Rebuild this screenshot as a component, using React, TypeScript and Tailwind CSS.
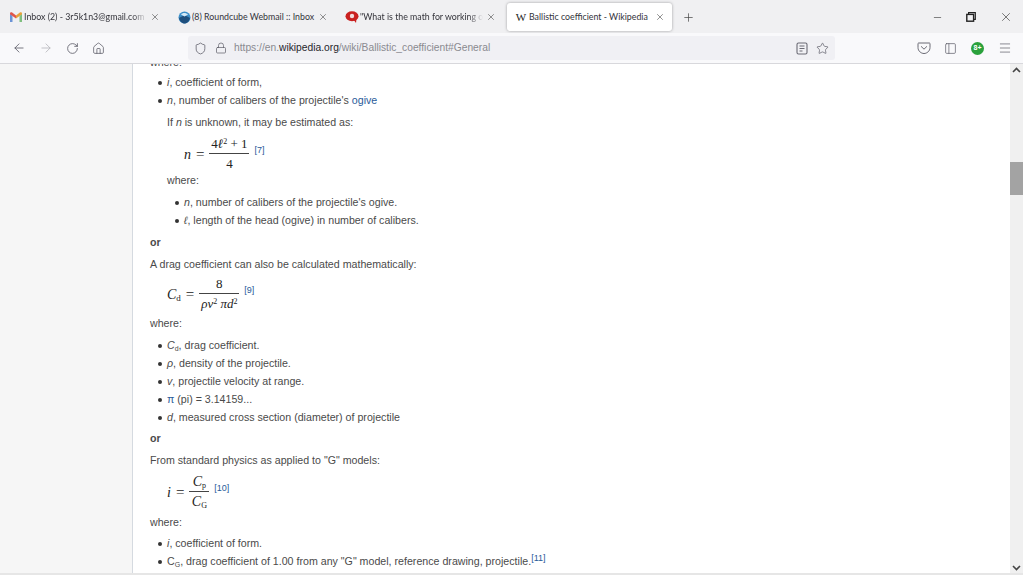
import { ArrowLeft, ArrowRight, Home, Lock, Menu, Minus, PanelLeft, Plus, RotateCw, Shield, Star, X } from "lucide-react";
import type { ReactNode } from "react";

const mathFont = "font-['Liberation_Serif',serif]";

const GmailIcon = () => (
	<svg width="12" height="10" viewBox="0 0 12 10">
		<path d="M0 1.5 V10 H2.5 V4 Z" fill="#6b93d6" />
		<path d="M12 1.5 V10 H9.5 V4 Z" fill="#7fbf7f" />
		<path d="M0 1.5 C0 0 1.5 0 2.2 .5 L6 3.6 L6 6.6 L0 2.2 Z" fill="#e0554a" />
		<path d="M12 1.5 C12 0 10.5 0 9.8 .5 L6 3.6 L6 6.6 L12 2.2 Z" fill="#e8a13a" />
	</svg>
);

const RoundcubeIcon = () => (
	<svg width="13" height="13" viewBox="0 0 13 13">
		<circle cx="6.5" cy="6.5" r="6" fill="#3d8fc9" />
		<path d="M1 7 L6.5 4 L12 7 C11 11 8.5 12.5 6.5 12.5 C4.5 12.5 2 11 1 7 Z" fill="#1f4f7d" />
		<path d="M3 3.5 C4.5 1.5 8 1.5 10 3.5 L6.5 5.5 Z" fill="#d5e9f6" />
	</svg>
);

const QuestionIcon = () => (
	<svg width="14" height="12" viewBox="0 0 14 12">
		<ellipse cx="7" cy="5.2" rx="6.5" ry="5" fill="#c9201f" />
		<circle cx="7" cy="5" r="2.2" fill="#f3dcdc" />
		<path d="M8 8 L11 12 L11.5 8 Z" fill="#c9201f" />
	</svg>
);

const PocketIcon = () => (
	<svg width="14" height="14" viewBox="0 0 14 14" fill="none" stroke="#6b6b75" strokeWidth="1">
		<path d="M1.5 2 H12.5 C13 2 13 2.5 13 3 V6.5 C13 10 10 12.5 7 12.5 C4 12.5 1 10 1 6.5 V3 C1 2.5 1 2 1.5 2 Z" />
		<path d="M4.3 5.6 L7 8.2 L9.7 5.6" strokeLinecap="round" />
	</svg>
);

const ReaderIcon = () => (
	<svg width="12" height="13" viewBox="0 0 12 13" fill="none" stroke="#6b6b75" strokeWidth="1.1">
		<rect x="1" y="1" width="10" height="11" rx="1.5" />
		<path d="M3.5 4 H8.5 M3.5 6.5 H8.5 M3.5 9 H6.5" />
	</svg>
);

const RestoreIcon = () => (
	<svg width="10" height="10" viewBox="0 0 10 10" fill="none" stroke="#222" strokeWidth="1.2">
		<rect x=".8" y="2.4" width="6.8" height="6.8" strokeWidth="1.4" />
		<path d="M2.6 2.2 V.7 H9.3 V7.4 H7.8" />
	</svg>
);

const Tab = ({ icon, title, active, fade }: { icon: ReactNode; title: string; active?: boolean; fade?: boolean }) => (
	<div
		className={
			active
				? "w-[165px] h-[28px] ml-[3px] flex items-center pl-[6px] pr-[7px] bg-white rounded-[3px] shadow-[0_0_3px_rgba(0,0,0,0.35)]"
				: "w-[168px] h-[28px] flex items-center pl-[8px] pr-[8px]"
		}
	>
		<span className="w-[16px] shrink-0 flex justify-center">{icon}</span>
		<span
			className={`flex-1 min-w-0 overflow-hidden whitespace-nowrap font-['Lato',sans-serif] text-[8.8px] text-[#33333a] ${
				fade ? "[mask-image:linear-gradient(to_right,black_88%,transparent)]" : ""
			}`}
		>
			{title}
		</span>
		<X size={10} strokeWidth={1.4} className="ml-[3px] shrink-0 text-[#444]" />
	</div>
);

const Slot = ({ children, w = "w-[27px]" }: { children: ReactNode; w?: string }) => (
	<span className={`${w} flex justify-center items-center shrink-0`}>{children}</span>
);

const Line = ({ className = "", children }: { className?: string; children: ReactNode }) => (
	<p className={`whitespace-nowrap ${className}`}>{children}</p>
);

const Bullet = ({ nested, children }: { nested?: boolean; children: ReactNode }) => (
	<div className={`h-[18px] flex items-center ${nested ? "pl-[25px]" : "pl-[8px]"}`}>
		<span className="w-[4px] h-[4px] rounded-full bg-[#333] shrink-0 mr-[5px]" />
		<span className="whitespace-nowrap">{children}</span>
	</div>
);

const Ref = ({ children }: { children: ReactNode }) => (
	<span className="font-['Liberation_Sans',sans-serif] text-[9px] text-[#2a5a99] self-center -mt-[6px]">{children}</span>
);

const Frac = ({ top, bottom, w }: { top: ReactNode; bottom: ReactNode; w: string }) => (
	<span className={`${w} inline-flex flex-col items-center mx-[5px]`}>
		<span className="leading-[18px] h-[19px] w-full text-center border-b border-[#444] whitespace-nowrap">{top}</span>
		<span className="leading-[19px] h-[19px] whitespace-nowrap">{bottom}</span>
	</span>
);

export default function App() {
	return (
		<div className="w-[1023px] h-[575px] overflow-hidden flex flex-col bg-white font-['Liberation_Sans',Arial,sans-serif]">
			{/* tab strip */}
			<div className="h-[33px] shrink-0 bg-[#f0f0f2] flex items-end pb-[2px]">
				<Tab fade icon={<GmailIcon />} title="Inbox (2) - 3r5k1n3@gmail.com" />
				<Tab icon={<RoundcubeIcon />} title="(8) Roundcube Webmail :: Inbox" />
				<Tab fade icon={<QuestionIcon />} title={'"What is the math for working out'} />
				<Tab active icon={<span className={`${mathFont} text-[11px] text-[#222]`}>W</span>} title="Ballistic coefficient - Wikipedia" />
				<Plus size={13} strokeWidth={1.3} className="ml-[10px] mb-[7px] text-[#444]" />
				<div className="ml-auto flex items-center mb-[7px]">
					<Slot w="w-[34px]"><Minus size={11} strokeWidth={1.3} className="text-[#333]" /></Slot>
					<Slot w="w-[34px]"><RestoreIcon /></Slot>
					<Slot w="w-[35px]"><X size={14} strokeWidth={1.1} className="text-[#333]" /></Slot>
				</div>
			</div>

			{/* nav bar */}
			<div className="h-[31px] shrink-0 bg-[#f9f9fb] border-b border-[#d8d8dc] flex items-center pl-[5px] text-[#5b5b66]">
				<Slot><ArrowLeft size={14} strokeWidth={1.4} /></Slot>
				<Slot><ArrowRight size={14} strokeWidth={1.4} className="text-[#b5b5ba]" /></Slot>
				<Slot><RotateCw size={13} strokeWidth={1.5} /></Slot>
				<Slot w="w-[25px]"><Home size={13} strokeWidth={1.4} /></Slot>
				<div className="ml-[77px] w-[647px] h-[24px] bg-[#f0f0f4] rounded-[3px] flex items-center pl-[6px] pr-[2px]">
					<Shield size={13} strokeWidth={1.4} />
					<Lock size={12} strokeWidth={1.4} className="ml-[8px]" />
					<span className="ml-[7px] text-[10.26px] text-[#8a8a90] whitespace-nowrap">
						https://en.<span className="text-[#26262c]">wikipedia.org</span>/wiki/Ballistic_coefficient#General
					</span>
					<span className="ml-auto flex items-center">
						<Slot w="w-[21px]"><ReaderIcon /></Slot>
						<Slot w="w-[21px]"><Star size={13} strokeWidth={1.3} /></Slot>
					</span>
				</div>
				<div className="ml-[75px] flex items-center">
					<Slot><PocketIcon /></Slot>
					<Slot><PanelLeft size={13} strokeWidth={1.3} /></Slot>
					<Slot>
						<span className="w-[13px] h-[13px] rounded-full bg-[#2aa13c] text-white text-[7px] font-bold flex items-center justify-center">8+</span>
					</Slot>
					<Slot><Menu size={14} strokeWidth={1.2} /></Slot>
				</div>
			</div>

			{/* page */}
			<div className="flex-1 min-h-0 flex">
				<div className="w-[132px] shrink-0 bg-[#f6f6f6]" />
				<div className="flex-1 min-w-0 overflow-hidden border-l border-[#d5dae0] pl-[17px] text-[10.65px] text-[#4a4a4a]">
					<div className="-mt-[10px]">
						<Line className="h-[16px] leading-[16px]">where:</Line>
						<div className="mt-[4px]">
							<Bullet><i>i</i>, coefficient of form,</Bullet>
							<Bullet><i>n</i>, number of calibers of the projectile's <span className="text-[#2a5a99]">ogive</span></Bullet>
						</div>
						<Line className="pl-[17px] mt-[3px] h-[18px] leading-[18px]">If <i>n</i> is unknown, it may be estimated as:</Line>
						<div className={`pl-[34px] h-[40px] pt-[6px] flex items-center text-[13px] text-[#222] ${mathFont}`}>
							<i className="text-[14px]">n</i>
							<span className="ml-[5px] text-[15px]">=</span>
							<Frac w="w-[40px]" top={<span>4<i>ℓ</i><sup className="text-[8px]">2</sup> + 1</span>} bottom="4" />
							<Ref>[7]</Ref>
						</div>
						<Line className="pl-[17px] h-[18px] leading-[18px]">where:</Line>
						<div className="mt-[5px]">
							<Bullet nested><i>n</i>, number of calibers of the projectile's ogive.</Bullet>
							<Bullet nested><i>ℓ</i>, length of the head (ogive) in number of calibers.</Bullet>
						</div>
						<Line className="mt-[3px] h-[18px] leading-[18px] font-bold">or</Line>
						<Line className="mt-[4px] h-[18px] leading-[18px]">A drag coefficient can also be calculated mathematically:</Line>
						<div className={`pl-[17px] mt-[1px] h-[39px] pt-[1px] flex items-center text-[13px] text-[#222] ${mathFont}`}>
							<span className="text-[14px]"><i>C</i><sub className="text-[9px]">d</sub></span>
							<span className="ml-[5px] text-[15px]">=</span>
							<Frac w="w-[40px]" top="8" bottom={<i>ρv<sup className="text-[8px] not-italic">2</sup> πd<sup className="text-[8px] not-italic">2</sup></i>} />
							<Ref>[9]</Ref>
						</div>
						<Line className="mt-[1px] h-[18px] leading-[18px]">where:</Line>
						<div className="mt-[5px]">
							<Bullet><i>C</i><sub className="text-[7px]">d</sub>, drag coefficient.</Bullet>
							<Bullet><i>ρ</i>, density of the projectile.</Bullet>
							<Bullet><i>v</i>, projectile velocity at range.</Bullet>
							<Bullet><span className="text-[#2a5a99]">π</span> (pi) = 3.14159...</Bullet>
							<Bullet><i>d</i>, measured cross section (diameter) of projectile</Bullet>
						</div>
						<Line className="mt-[2px] h-[18px] leading-[18px] font-bold">or</Line>
						<Line className="mt-[4px] h-[18px] leading-[18px]">From standard physics as applied to "G" models:</Line>
						<div className={`pl-[17px] mt-[1px] h-[42px] pt-[2px] flex items-center text-[14px] text-[#222] ${mathFont}`}>
							<i>i</i>
							<span className="ml-[5px] text-[15px]">=</span>
							<Frac w="w-[20px]" top={<span><i>C</i><sub className="text-[8px]">p</sub></span>} bottom={<span><i>C</i><sub className="text-[8px]">G</sub></span>} />
							<Ref>[10]</Ref>
						</div>
						<Line className="mt-[1px] h-[18px] leading-[18px]">where:</Line>
						<div className="mt-[4px]">
							<Bullet><i>i</i>, coefficient of form.</Bullet>
							<Bullet>
								C<sub className="text-[7px]">G</sub>, drag coefficient of 1.00 from any "G" model, reference drawing, projectile.
								<sup className="text-[9px] text-[#2a5a99]">[11]</sup>
							</Bullet>
						</div>
					</div>
				</div>
				<div className="w-[13px] shrink-0 bg-[#f0f0f0] flex flex-col items-center text-[#444]">
					<svg width="9" height="6" viewBox="0 0 9 6" className="mt-[3px]"><path d="M1 5 L4.5 1.5 L8 5" fill="none" stroke="currentColor" strokeWidth="1.6" /></svg>
					<div className="w-full h-[33px] bg-[#a3a3a3] mt-[89px]" />
					<svg width="9" height="6" viewBox="0 0 9 6" className="mt-auto mb-[2px]"><path d="M1 1 L4.5 4.5 L8 1" fill="none" stroke="currentColor" strokeWidth="1.6" /></svg>
				</div>
			</div>
			<div className="h-[2px] shrink-0 bg-[#e6e6e6]" />
		</div>
	);
}
